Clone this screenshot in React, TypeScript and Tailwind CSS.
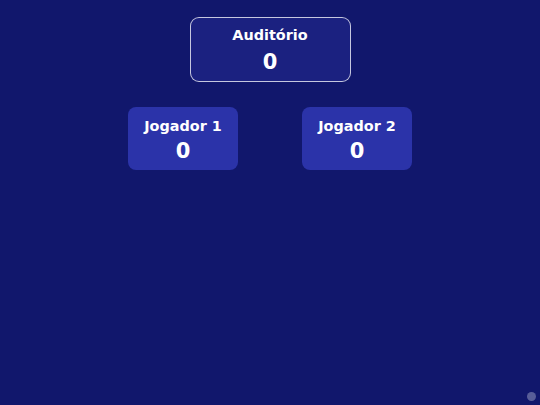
const font = "font-['DejaVu_Sans',sans-serif]";

const players = [
  { name: "Jogador 1", score: 0 },
  { name: "Jogador 2", score: 0 },
];

export default function App() {
  return (
    <div className={`relative w-[540px] h-[405px] overflow-hidden bg-[#11176c] text-white ${font}`}>
      <div className="flex flex-col items-center pt-[17px]">
        <div className="w-[161px] h-[65px] flex flex-col items-center pt-[7px] rounded-[9px] border border-white/75 bg-[#1b2180]">
          <div className="text-[14.4px] leading-[20px] font-bold">Auditório</div>
          <div className="mt-[5px] text-[21px] leading-[25px] font-bold">0</div>
        </div>

        <div className="mt-[25px] flex gap-[64px]">
          {players.map((p) => (
            <div
              key={p.name}
              className="w-[110px] h-[63px] flex flex-col items-center pt-[9px] rounded-[8px] bg-[#2b33a9]"
            >
              <div className="text-[14.4px] leading-[20px] font-bold">{p.name}</div>
              <div className="mt-[3px] text-[21px] leading-[25px] font-bold">{p.score}</div>
            </div>
          ))}
        </div>
      </div>

      <div className="absolute right-[4px] bottom-[4px] w-[9px] h-[9px] rounded-full bg-white/30" />
    </div>
  );
}
